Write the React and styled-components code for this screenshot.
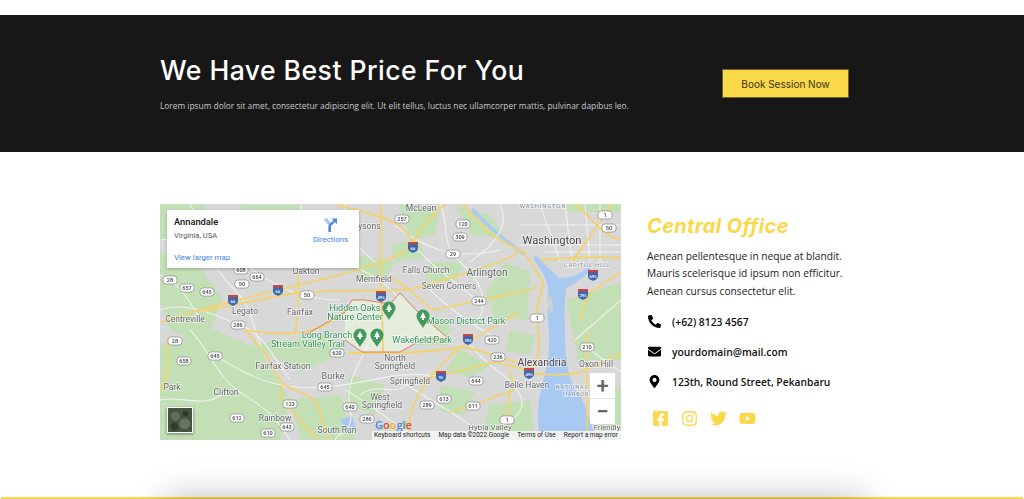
import React from 'react';
import styled, { createGlobalStyle } from 'styled-components';
import { FaPhoneAlt, FaEnvelope, FaMapMarkerAlt, FaFacebookSquare, FaInstagram, FaTwitter, FaYoutube } from 'react-icons/fa';

const YELLOW = '#fbd74a';

const GlobalStyle = createGlobalStyle`
	html, body {
		margin: 0;
		background: #fff;
	}
	body {
		font-family: 'Open Sans', sans-serif;
	}
`;

const Page = styled.div`
	position: relative;
	height: 499px;
	padding-top: 15px;
	box-sizing: border-box;
	overflow: hidden;
`;

const Banner = styled.section`
	display: flex;
	justify-content: space-between;
	height: 137px;
	box-sizing: border-box;
	padding: 38px 175px 0 160px;
	background: #171717;
`;

const BannerTitle = styled.h2`
	margin: 0;
	font-family: Inter, sans-serif;
	font-size: 26.6px;
	line-height: 34px;
	font-weight: 500;
	letter-spacing: 0.45px;
	color: #fff;
`;

const BannerText = styled.p`
	margin: 12px 0 0;
	font-size: 8.35px;
	line-height: 14px;
	color: #c9c9c9;
`;

const BookButton = styled.a`
	display: flex;
	align-items: center;
	justify-content: center;
	width: 127px;
	height: 29px;
	margin-top: 16px;
	box-sizing: border-box;
	background: ${YELLOW};
	border: 1px solid #6e6029;
	font-family: Inter, sans-serif;
	font-size: 10px;
	color: #3a3415;
`;

const ContactSection = styled.section`
	display: flex;
	gap: 26px;
	padding: 52px 0 0 160px;
`;

const MapFrame = styled.div`
	position: relative;
	width: 461px;
	height: 236px;
	overflow: hidden;
	background: #d8d8d8;
`;

const MapSvg = styled.svg`
	display: block;
	width: 100%;
	height: 100%;
	filter: blur(0.35px);
`;

const MapLabel = styled.text`
	font-family: Roboto, sans-serif;
	font-size: ${p => p.$size || 8.5}px;
	fill: ${p => p.$color || '#5f6368'};
	letter-spacing: ${p => p.$spacing || 0}px;
	text-anchor: middle;
	paint-order: stroke;
	stroke: rgba(255, 255, 255, 0.7);
	stroke-width: 1.4px;
`;

const ShieldText = styled.text`
	font-family: Roboto, sans-serif;
	font-size: 5.6px;
	font-weight: 500;
	fill: #444;
	text-anchor: middle;
`;

const InterstateText = styled.text`
	font-family: Roboto, sans-serif;
	font-size: 4.2px;
	font-weight: 500;
	fill: #fff;
	text-anchor: middle;
`;

const InfoCard = styled.div`
	position: absolute;
	left: 7px;
	top: 6px;
	width: 192px;
	height: 58px;
	padding: 7px;
	box-sizing: border-box;
	background: #fff;
	box-shadow: 0 1px 3px rgba(0, 0, 0, 0.25);
	font-family: Roboto, sans-serif;
`;

const PlaceName = styled.div`
	font-size: 9.3px;
	line-height: 10px;
	font-weight: 500;
	color: #111;
`;

const PlaceRegion = styled.div`
	margin-top: 4px;
	font-size: 7.6px;
	line-height: 9px;
	color: #5b5b5b;
`;

const MapLink = styled.div`
	font-size: 7.8px;
	line-height: 9px;
	color: #3f7fe0;
`;

const LargerMap = styled(MapLink)`
	margin-top: 13px;
`;

const Directions = styled.div`
	position: absolute;
	right: 11px;
	top: 7px;
	display: flex;
	flex-direction: column;
	align-items: center;
	gap: 2px;
`;

const ZoomControl = styled.div`
	position: absolute;
	right: 6px;
	bottom: 16px;
	width: 25px;
	display: flex;
	flex-direction: column;
	background: #fff;
`;

const ZoomButton = styled.div`
	display: flex;
	align-items: center;
	justify-content: center;
	height: 25px;
	font-family: Roboto, sans-serif;
	font-size: 22px;
	line-height: 25px;
	font-weight: 500;
	color: #666;
	border-top: ${p => (p.$divided ? '1px solid #e6e6e6' : 'none')};
`;

const Thumbnail = styled.svg`
	position: absolute;
	left: 7px;
	bottom: 7px;
	width: 26px;
	height: 26px;
	border: 1px solid #fff;
	box-sizing: border-box;
	box-shadow: 0 1px 3px rgba(0, 0, 0, 0.45);
`;

const Attribution = styled.div`
	position: absolute;
	right: 0;
	bottom: 0;
	display: flex;
	gap: 8px;
	height: 9px;
	padding: 0 3px 0 2px;
	background: rgba(245, 245, 245, 0.9);
	font-family: Roboto, sans-serif;
	font-size: 6.5px;
	line-height: 9px;
	color: #222;
	white-space: nowrap;
`;

const GoogleMark = styled.div`
	position: absolute;
	left: 215px;
	bottom: 9px;
	font-family: 'Open Sans', sans-serif;
	font-size: 11px;
	line-height: 12px;
	font-weight: 600;
`;

const GoogleLetter = styled.span`
	color: ${p => p.$color};
`;

const Office = styled.div`
	width: 220px;
`;

const OfficeTitle = styled.h3`
	margin: 10px 0 0;
	font-family: Inter, sans-serif;
	font-size: 20px;
	line-height: 24px;
	font-weight: 700;
	font-style: italic;
	letter-spacing: 0.35px;
	color: ${YELLOW};
`;

const OfficeText = styled.p`
	margin: 9.5px 0 0;
	font-size: 10.2px;
	line-height: 17.6px;
	color: #222;
`;

const ContactList = styled.div`
	display: flex;
	flex-direction: column;
	gap: 12px;
	margin-top: 12.5px;
`;

const ContactRow = styled.div`
	display: flex;
	align-items: center;
	gap: 11px;
	height: 18px;
	font-size: 10.3px;
	font-weight: 600;
	color: #111;
`;

const ContactIcon = styled.span`
	display: flex;
	justify-content: center;
	width: 14px;
	font-size: 13px;
	color: #000;
`;

const SocialRow = styled.div`
	display: flex;
	align-items: center;
	gap: 12px;
	margin: 19px 0 0 5px;
	font-size: 17px;
	color: ${YELLOW};

	svg {
		display: block;
	}
`;

const FooterLine = styled.div`
	position: absolute;
	left: 1px;
	right: 1px;
	bottom: 0;
	height: 2px;
	background: ${YELLOW};
`;

const FooterShade = styled.div`
	position: absolute;
	left: 165px;
	right: 160px;
	top: 499px;
	height: 60px;
	box-shadow: 0 0 36px 0 rgba(0, 0, 0, 0.28);
`;

const parks = [
	'M160 252 L196 262 L222 298 L206 345 L170 330 L160 300Z',
	'M160 345 L215 330 L260 350 L290 400 L280 440 L160 440Z',
	'M250 345 L330 335 L345 352 L300 372 L285 362Z',
	'M290 400 L340 395 L355 440 L300 440Z',
	'M412 312 L450 322 L448 345 L415 345Z',
	'M505 262 L530 272 L527 320 L494 318 L486 292Z',
	'M400 205 L440 210 L435 235 L410 240Z',
	'M455 205 L490 215 L505 238 L470 235Z',
	'M566 300 L621 282 L621 360 L578 360Z',
	'M590 395 L621 385 L621 440 L600 440Z',
	'M490 405 L530 400 L535 440 L480 440Z',
	'M390 245 L420 240 L425 258 L395 262Z',
	'M240 205 L300 205 L290 240 L250 245Z',
	'M300 250 L350 250 L345 268 L305 268Z',
	'M440 385 L475 392 L465 415 L440 412Z',
	'M160 204 L205 204 L200 235 L160 240Z',
	'M350 375 L385 385 L375 415 L345 405Z',
	'M460 350 L490 365 L470 378 L445 370Z',
	'M355 255 L395 262 L385 280 L360 280Z',
	'M430 262 L465 262 L455 282 L425 280Z',
	'M510 330 L535 335 L530 355 L505 350Z',
	'M560 204 L621 204 L621 212 L570 212Z',
];

const minorRoads = [
	'M160 240 C200 235 225 250 250 268 S300 300 340 300',
	'M190 204 C205 230 205 260 230 285 S250 320 262 350',
	'M300 204 C305 235 320 250 345 262 S385 280 400 300',
	'M345 204 C340 230 360 250 375 262',
	'M160 310 C190 300 220 318 240 325 S270 350 290 380',
	'M190 330 C210 350 215 375 240 392 S270 410 290 440',
	'M215 356 C240 370 270 392 325 387 S390 370 440 376',
	'M370 340 C360 365 345 380 350 407 S340 430 335 440',
	'M440 204 C450 225 440 245 460 262 S490 300 478 320',
	'M395 225 C420 245 450 262 500 250',
	'M418 250 C440 275 470 290 480 305',
	'M500 204 C510 225 495 245 470 262',
	'M540 204 L560 262 M565 204 L572 262 M585 204 L590 262 M520 225 L621 225 M520 245 L621 245',
	'M545 252 L621 252 M600 204 L600 262',
	'M470 345 C490 370 510 375 520 395 S505 420 490 440',
	'M400 380 C420 395 450 410 470 425',
	'M575 340 L621 300 M590 350 L621 372',
	'M345 390 C365 400 395 425 420 440',
	'M160 400 C185 395 205 410 225 392',
	'M425 285 C445 305 470 325 500 340',
	'M160 275 C180 285 190 300 200 320',
	'M360 395 C380 380 395 400 410 381',
];

const majorRoads = [
	'M160 322 C175 318 190 313 198 310 C225 303 255 296 278 290 C320 280 355 272 381 262 C400 255 410 250 413 243 C420 228 432 215 445 204',
	'M198 312 C235 305 265 298 295 293 C330 290 365 291 395 290 C410 290 420 287 467 273 C490 266 510 258 523 250',
	'M381 204 C380 235 380 265 381 290 C382 310 383 330 383 352',
	'M335 204 C355 210 378 214 395 223 C402 228 410 235 413 243',
	'M298 273 L298 310 C297 320 296 328 295 333',
	'M245 330 C252 338 258 345 265 353 C272 365 276 375 282 383 C293 390 305 394 315 400 C321 412 323 420 325 430 L328 440',
	'M282 383 L280 397 C288 407 295 415 302 423 C308 430 313 434 318 440',
	'M245 330 C262 333 278 334 295 333 C310 332 325 328 345 312',
	'M168 335 C169 345 168 355 167 375 L160 392',
	'M348 353 L395 353 C425 352 445 350 463 347 C478 350 490 354 500 357 L520 363',
	'M410 440 C410 430 410 425 410 417 C413 405 418 395 423 387 C435 370 450 355 467 343 C480 335 490 329 500 323 L520 312',
	'M417 380 C440 376 465 369 490 363 C505 362 520 368 530 373 C545 375 560 376 577 373 C592 368 605 362 621 353',
	'M537 320 C539 335 540 345 538 355 L530 373',
	'M510 370 C512 378 513 384 513 390 C495 397 482 402 467 407 L450 412',
	'M510 390 C508 405 507 418 507 431',
	'M390 277 C410 288 420 300 433 310 C470 302 505 296 537 287',
	'M463 204 C470 215 480 224 490 233 C500 240 510 246 520 250',
	'M523 250 C530 262 537 272 543 283 C541 292 539 300 537 307 L537 320',
	'M540 260 C565 258 595 256 621 258',
	'M580 320 C583 310 586 300 590 293 C600 285 612 278 621 272',
	'M587 333 C586 365 587 400 587 431',
	'M575 204 C590 215 600 235 621 240',
	'M612 204 C595 230 580 250 572 262',
];

const boundary = 'M305 335 L345 312 L352 300 L365 300 L390 304 L400 293 L418 312 L450 340 L425 338 L400 352 L362 352 L345 340';

const labels = [
	{ x: 367, y: 229, t: 'Tysons' },
	{ x: 306, y: 274, t: 'Oakton' },
	{ x: 374, y: 282, t: 'Merrifield' },
	{ x: 245, y: 314, t: 'Legato' },
	{ x: 300, y: 315, t: 'Fairfax' },
	{ x: 185, y: 322, t: 'Centreville' },
	{ x: 421, y: 211, t: 'McLean' },
	{ x: 552, y: 244, t: 'Washington', size: 11.2, color: '#444' },
	{ x: 543, y: 208, t: 'WASHINGTON', size: 5.8, spacing: 0.9, color: '#7f8a96' },
	{ x: 426, y: 273, t: 'Falls Church' },
	{ x: 487, y: 276, t: 'Arlington', size: 10.2 },
	{ x: 449, y: 289, t: 'Seven Corners' },
	{ x: 587, y: 267, t: 'CAPITOL HILL', size: 6, spacing: 0.7, color: '#7f8a96' },
	{ x: 283, y: 369, t: 'Fairfax Station' },
	{ x: 333, y: 379, t: 'Burke', size: 9 },
	{ x: 226, y: 395, t: 'Clifton' },
	{ x: 275, y: 421, t: 'Rainbow' },
	{ x: 380, y: 400, t: 'West' },
	{ x: 382, y: 408, t: 'Springfield' },
	{ x: 337, y: 433, t: 'South Run' },
	{ x: 172, y: 390, t: 'Park' },
	{ x: 395, y: 361, t: 'North' },
	{ x: 395, y: 369, t: 'Springfield' },
	{ x: 542, y: 366, t: 'Alexandria', size: 10.4, color: '#444' },
	{ x: 596, y: 367, t: 'Oxon Hill' },
	{ x: 527, y: 388, t: 'Belle Haven' },
	{ x: 572, y: 389, t: 'NATIONAL', size: 5.6, spacing: 0.7, color: '#7f8a96' },
	{ x: 576, y: 396, t: 'HARBOR', size: 5.6, spacing: 0.7, color: '#7f8a96' },
	{ x: 410, y: 384, t: 'Springfield' },
	{ x: 490, y: 430, t: 'Hybla Valley', size: 8 },
	{ x: 607, y: 430, t: 'Friendly', size: 7.6 },
	{ x: 355, y: 311, t: 'Hidden Oaks', size: 9, color: '#2f8f55' },
	{ x: 355, y: 320, t: 'Nature Center', size: 9, color: '#2f8f55' },
	{ x: 327, y: 338, t: 'Long Branch', size: 9, color: '#2f8f55' },
	{ x: 308, y: 347, t: 'Stream Valley Trail', size: 9, color: '#2f8f55' },
	{ x: 422, y: 343, t: 'Wakefield Park', size: 9, color: '#2f8f55' },
	{ x: 466, y: 324, t: 'Mason District Park', size: 9, color: '#2f8f55' },
];

const shields = [
	[241, 270, '608'], [257, 277, '664'], [170, 280, '28'], [187, 288, '657'], [207, 292, '645'],
	[242, 284, '50'], [307, 295, '50'], [402, 219, '257'], [463, 224, '120'], [460, 237, '309'],
	[453, 254, '29'], [605, 215, '1'], [609, 228, '50'], [479, 301, '244'], [537, 318, '1'],
	[238, 325, '286'], [175, 341, '28'], [184, 361, '658'], [215, 356, '645'], [337, 353, '620'],
	[325, 387, '645'], [290, 404, '123'], [350, 407, '640'], [237, 418, '612'], [367, 419, '286'],
	[287, 427, '643'], [268, 433, '610'], [492, 340, '420'], [498, 357, '236'], [587, 347, '210'],
	[476, 381, '644'], [444, 399, '613'], [427, 405, '289'], [473, 406, '611'], [507, 420, '1'],
];

const interstates = [
	[278, 290, '66'], [233, 300, '66'], [381, 296, '495'], [413, 247, '66'], [593, 275, '695'],
	[583, 294, '295'], [468, 339, '395'], [441, 376, '95'], [529, 373, '495'],
];

const parkPins = [[389, 311], [423, 319], [360, 338], [377, 338]];

const MapDrawing = () => (
	<MapSvg viewBox="160 204 461 236">
		<rect x="160" y="204" width="461" height="236" fill="#d8d8d8" />
		<g fill="#c2dfb5">
			{parks.map((d, index) => <path key={index} d={d} />)}
		</g>
		<path d="M345 312 L352 300 L365 300 L390 304 L400 293 L418 312 L450 340 L425 338 L400 352 L362 352 L345 340Z" fill="#e4ecdc" />
		<g fill="#a8c9f2">
			<path d="M533 258 C540 268 545 276 547 283 C550 295 546 312 549 330 L565 330 C564 315 565 298 566 288 C575 284 582 278 592 270 L589 267 C580 274 570 280 558 277 C550 270 542 262 536 255Z" />
			<path d="M473 208 C490 225 505 240 525 252 L523 255 C505 243 488 228 471 211Z" />
			<path d="M549 330 C550 350 548 365 542 385 C536 410 538 425 540 440 L596 440 C590 420 585 405 580 395 C570 385 565 365 565 330Z" />
			<path d="M340 420 L348 432 L356 428 L352 416Z" />
		</g>
		<path d="M547 293 C554 298 554 310 551 314 C548 308 546 300 547 293Z" fill="#cfcfcf" />
		<g fill="none" stroke="#f1f1f1" strokeWidth="1.1">
			{minorRoads.map((d, index) => <path key={index} d={d} />)}
		</g>
		<g fill="none" stroke="#f2d36e" strokeWidth="1.8">
			{majorRoads.map((d, index) => <path key={index} d={d} />)}
		</g>
		<path d={boundary} fill="none" stroke="#e2714f" strokeWidth="0.9" />
		{shields.map(([x, y, t], index) => (
			<g key={index}>
				<rect x={x - 7} y={y - 4} width="14" height="8" rx="3" fill="#fff" stroke="#777" strokeWidth="0.6" />
				<ShieldText x={x} y={y + 2}>{t}</ShieldText>
			</g>
		))}
		{interstates.map(([x, y, t], index) => (
			<g key={index}>
				<path d={`M${x - 5} ${y - 5} H${x + 5} V${y + 1} C${x + 5} ${y + 4} ${x + 2} ${y + 5} ${x} ${y + 6} C${x - 2} ${y + 5} ${x - 5} ${y + 4} ${x - 5} ${y + 1}Z`} fill="#3d68b0" />
				<rect x={x - 5} y={y - 5} width="10" height="2.4" fill="#c2473f" />
				<InterstateText x={x} y={y + 2.5}>{t}</InterstateText>
			</g>
		))}
		{labels.map((label, index) => (
			<MapLabel key={index} x={label.x} y={label.y} $size={label.size} $color={label.color} $spacing={label.spacing}>
				{label.t}
			</MapLabel>
		))}
		{parkPins.map(([x, y], index) => (
			<g key={index}>
				<path d={`M${x} ${y + 9} C${x - 2} ${y + 5} ${x - 6.5} ${y + 1} ${x - 6.5} ${y - 3} A6.5 6.5 0 0 1 ${x + 6.5} ${y - 3} C${x + 6.5} ${y + 1} ${x + 2} ${y + 5} ${x} ${y + 9}Z`} fill="#3f9a5c" />
				<path d={`M${x} ${y - 7} L${x + 3} ${y - 1} H${x + 1} V${y + 1} H${x - 1} V${y - 1} H${x - 3}Z`} fill="#fff" />
			</g>
		))}
	</MapSvg>
);

const DirectionsIcon = () => (
	<svg width="16" height="16" viewBox="0 0 16 16">
		<path d="M1.5 2.5 L5 1 L9 6.5 V15 H6.5 V8 Z" fill="#a9c4f5" />
		<path d="M8 6.5 L11.5 3.5 L9.5 1.5 H15 V7 L13 5 L9 9 V15 H6.5 V9 Z" fill="#4a86e8" />
	</svg>
);

const App = () => {
	return (
		<Page>
			<GlobalStyle />
			<Banner>
				<div>
					<BannerTitle>We Have Best Price For You</BannerTitle>
					<BannerText>Lorem ipsum dolor sit amet, consectetur adipiscing elit. Ut elit tellus, luctus nec ullamcorper mattis, pulvinar dapibus leo.</BannerText>
				</div>
				<BookButton>Book Session Now</BookButton>
			</Banner>
			<ContactSection>
				<MapFrame>
					<MapDrawing />
					<InfoCard>
						<PlaceName>Annandale</PlaceName>
						<PlaceRegion>Virginia, USA</PlaceRegion>
						<LargerMap>View larger map</LargerMap>
						<Directions>
							<DirectionsIcon />
							<MapLink>Directions</MapLink>
						</Directions>
					</InfoCard>
					<Thumbnail viewBox="0 0 26 26">
						<rect width="26" height="26" fill="#46533f" />
						<circle cx="8" cy="9" r="5" fill="#5d6f57" />
						<circle cx="18" cy="17" r="6" fill="#66755f" />
						<circle cx="19" cy="6" r="3" fill="#2e3a28" />
						<circle cx="7" cy="20" r="4" fill="#303c28" />
					</Thumbnail>
					<ZoomControl>
						<ZoomButton>+</ZoomButton>
						<ZoomButton $divided>−</ZoomButton>
					</ZoomControl>
					<GoogleMark>
						<GoogleLetter $color="#4285f4">G</GoogleLetter>
						<GoogleLetter $color="#ea4335">o</GoogleLetter>
						<GoogleLetter $color="#fbbc05">o</GoogleLetter>
						<GoogleLetter $color="#4285f4">g</GoogleLetter>
						<GoogleLetter $color="#34a853">l</GoogleLetter>
						<GoogleLetter $color="#ea4335">e</GoogleLetter>
					</GoogleMark>
					<Attribution>
						<span>Keyboard shortcuts</span>
						<span>Map data ©2022 Google</span>
						<span>Terms of Use</span>
						<span>Report a map error</span>
					</Attribution>
				</MapFrame>
				<Office>
					<OfficeTitle>Central Office</OfficeTitle>
					<OfficeText>
						Aenean pellentesque in neque at blandit.<br />
						Mauris scelerisque id ipsum non efficitur.<br />
						Aenean cursus consectetur elit.
					</OfficeText>
					<ContactList>
						<ContactRow><ContactIcon><FaPhoneAlt /></ContactIcon>(+62) 8123 4567</ContactRow>
						<ContactRow><ContactIcon><FaEnvelope /></ContactIcon>yourdomain@mail.com</ContactRow>
						<ContactRow><ContactIcon><FaMapMarkerAlt /></ContactIcon>123th, Round Street, Pekanbaru</ContactRow>
					</ContactList>
					<SocialRow>
						<FaFacebookSquare />
						<FaInstagram />
						<FaTwitter />
						<FaYoutube />
					</SocialRow>
				</Office>
			</ContactSection>
			<FooterLine />
			<FooterShade />
		</Page>
	);
};

export default App;
